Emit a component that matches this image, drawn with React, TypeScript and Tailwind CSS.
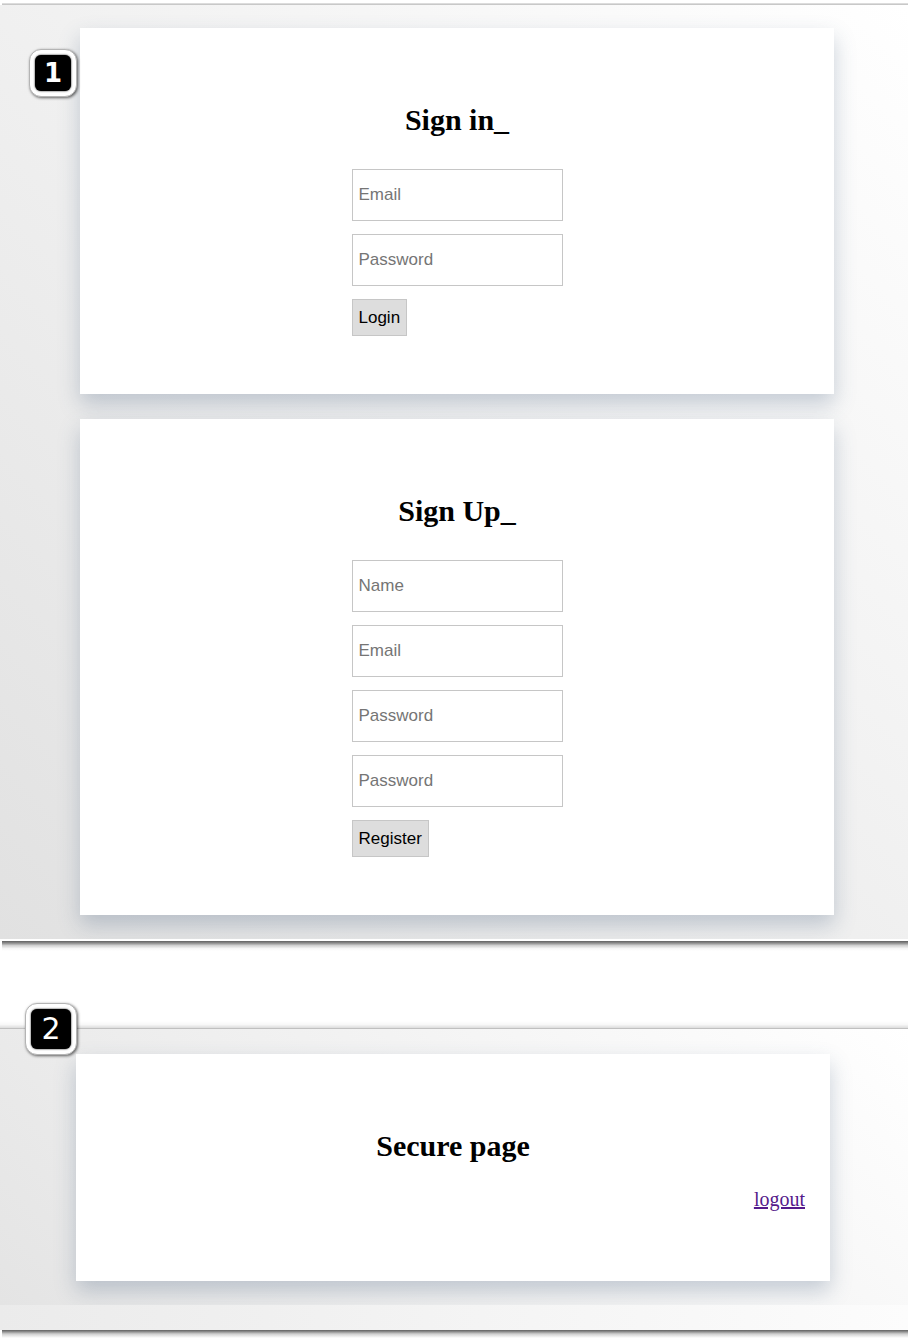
import React from "react";

type FieldProps = { label: string; type: string; name: string };

function Field({ label, type, name }: FieldProps) {
  return (
    <input
      name={name}
      type={type}
      placeholder={label}
      aria-label={label}
      className="h-[52px] w-full border border-[#c6c6c6] bg-white px-1.5 text-[17px] text-black placeholder:text-[#757575]"
    />
  );
}

function Card({ title, children }: { title: string; children: React.ReactNode }) {
  return (
    <section className="flex flex-col items-center bg-white px-[25px] pt-[74px] pb-[58px] shadow-[0_10px_20px_rgba(63,89,122,0.27)]">
      <h2 className="mb-[31px] font-['Liberation_Serif',serif] text-[30px] leading-9 font-bold text-black">
        {title}
      </h2>
      {children}
    </section>
  );
}

function AuthForm({ fields, action }: { fields: FieldProps[]; action: string }) {
  return (
    <form
      className="flex w-[211px] flex-col items-start gap-[13px]"
      onSubmit={(e) => e.preventDefault()}
    >
      {fields.map((f) => (
        <Field key={f.name} {...f} />
      ))}
      <button
        type="submit"
        className="h-[37px] border border-[#c6c6c6] bg-[#dddddd] px-1.5 text-[17px] text-black"
      >
        {action}
      </button>
    </form>
  );
}

export default function App() {
  return (
    <main className="bg-white pb-3 font-['Liberation_Sans',sans-serif]">
      <div className="relative pt-[3px]">
        <div className="ml-0.5 h-0.5 border-t border-[#dcdcdc] bg-[#c8c8c8]" />
        <div className="flex flex-col gap-[25px] bg-linear-[225deg,#ffffff,#e1e1e1] pt-[23px] pr-[74px] pb-6 pl-20">
          <Card title="Sign in_">
            <AuthForm
              action="Login"
              fields={[
                { label: "Email", type: "email", name: "email" },
                { label: "Password", type: "password", name: "password" },
              ]}
            />
          </Card>
          <Card title="Sign Up_">
            <AuthForm
              action="Register"
              fields={[
                { label: "Name", type: "text", name: "new-name" },
                { label: "Email", type: "email", name: "new-email" },
                { label: "Password", type: "password", name: "new-password" },
                { label: "Password", type: "password", name: "repeat-password" },
              ]}
            />
          </Card>
        </div>
        <div className="relative h-3 border-t-2 border-white bg-white pl-0.5">
          <div className="h-[10px] bg-linear-[180deg,#606060,#8a8a8a_20%,#d0d0d0_45%,#f6f6f6_75%,#ffffff]" />
        </div>
        <div className="absolute top-[49px] left-[29px] flex size-12 items-center justify-center rounded-xl border border-[#b4b4b4] bg-white shadow-[1px_1px_3px_rgba(0,0,0,0.6)]">
          <span className="flex size-9 items-center justify-center rounded-md bg-black font-['DejaVu_Sans',sans-serif] text-[26px] leading-none font-bold text-white shadow-[0_0_2px_#000000]">
            1
          </span>
        </div>
      </div>

      <div className="relative mt-[70px]">
        <div className="h-[7px] bg-linear-[180deg,#ffffff,#f8f8f8_50%,#dcdcdc]" />
        <div className="border-t border-[#c0c0c0] bg-linear-[225deg,#ffffff,#e4e4e4] pt-[25px] pr-[78px] pb-6 pl-[76px]">
          <Card title="Secure page">
            <div className="-mt-2 flex w-full justify-end pb-3">
              <a
                href="#logout"
                className="font-['Liberation_Serif',serif] text-[20px] leading-6 text-[#551a8b] underline"
              >
                logout
              </a>
            </div>
          </Card>
        </div>
        <div className="relative h-[25px] bg-linear-[90deg,#ebebeb,#fcfcfc]" />
        <div className="ml-0.5 h-2 bg-linear-[180deg,#606060,#8a8a8a_20%,#d0d0d0_50%,#ffffff]" />
        <div className="absolute -top-[18px] left-[25px] flex size-[52px] items-center justify-center rounded-xl border border-[#b4b4b4] bg-white shadow-[1px_1px_3px_rgba(0,0,0,0.6)]">
          <span className="flex size-10 items-center justify-center rounded-md bg-black font-['DejaVu_Sans',sans-serif] text-[30px] leading-none text-white shadow-[0_0_2px_#000000]">
            2
          </span>
        </div>
      </div>
    </main>
  );
}
